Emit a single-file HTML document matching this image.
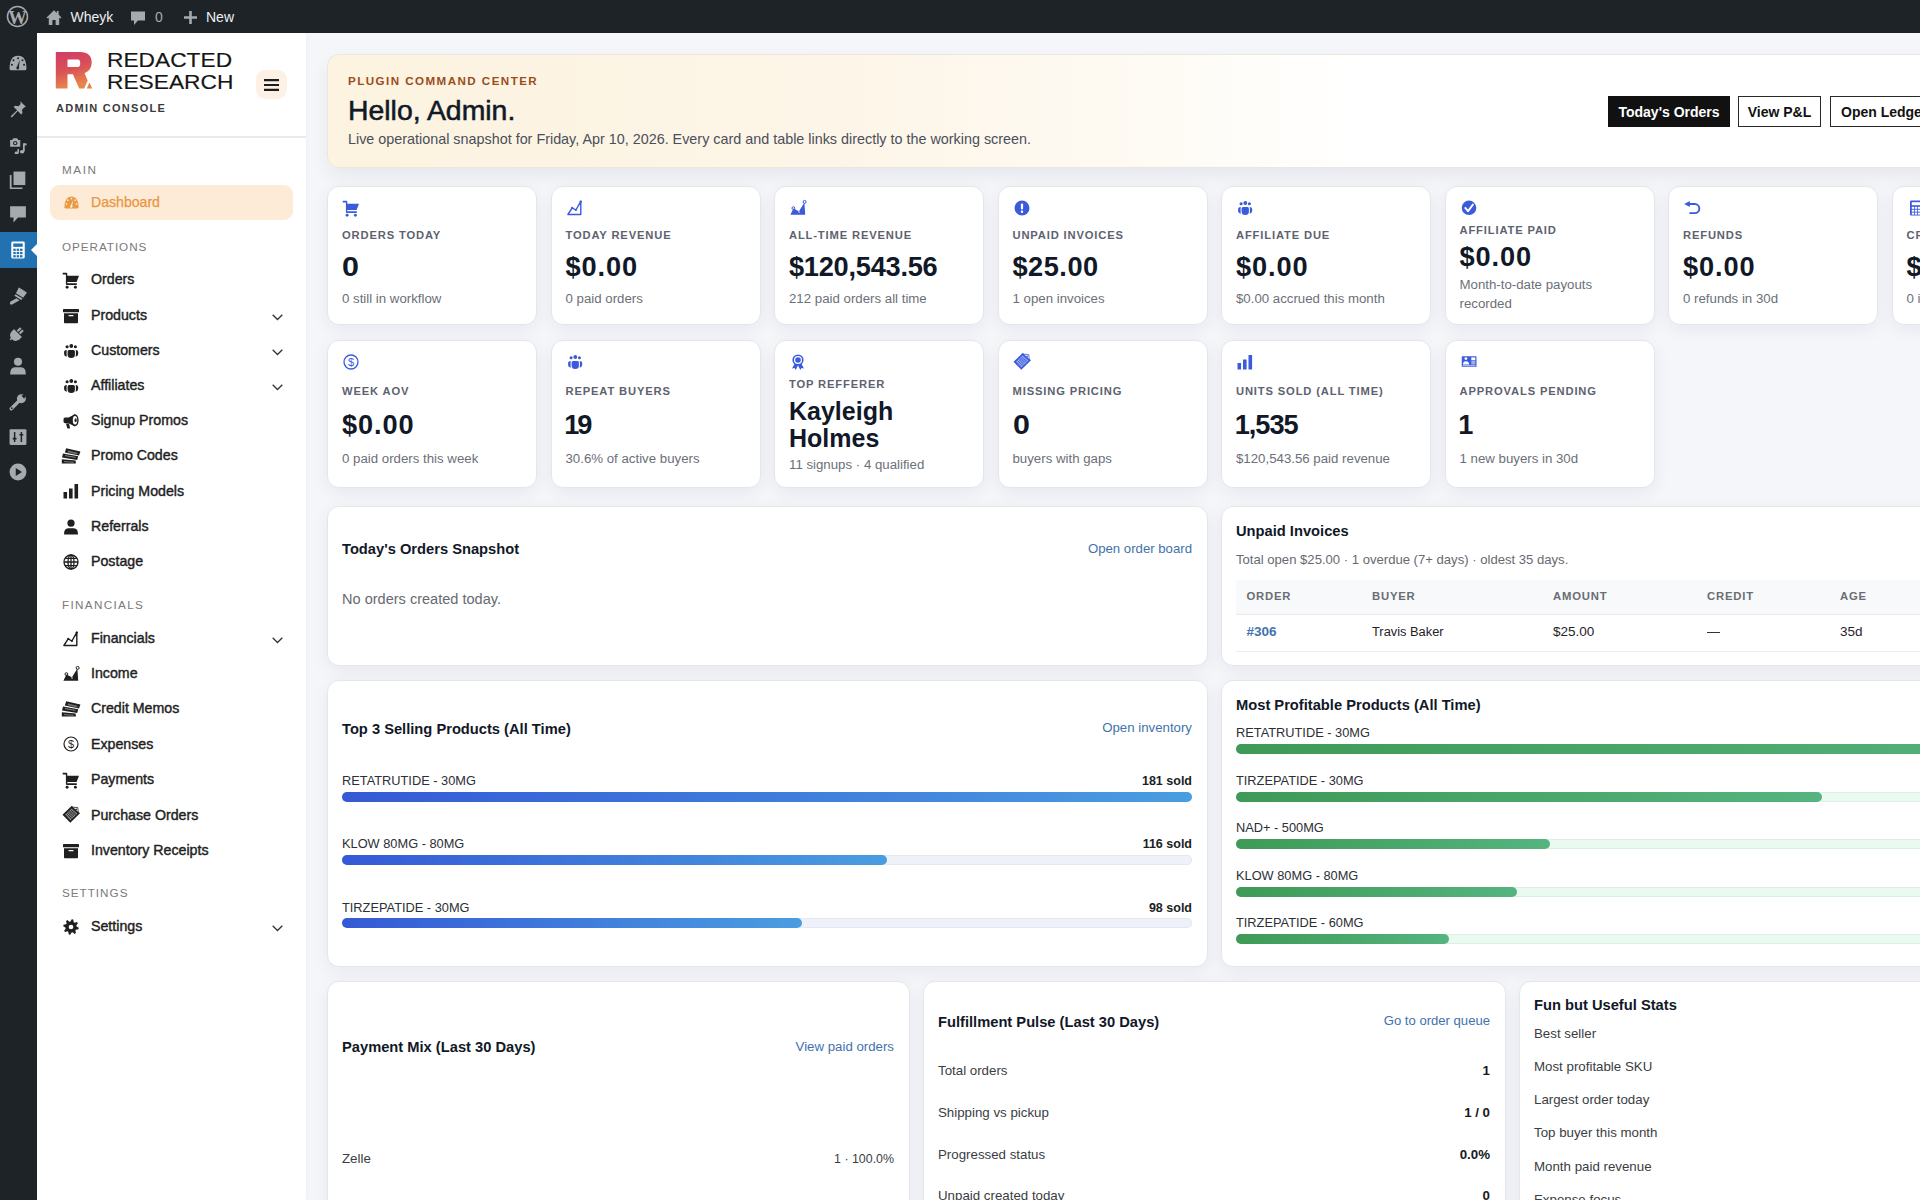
<!DOCTYPE html>
<html><head><meta charset="utf-8"><title>Dashboard</title>
<style>
html,body{margin:0;padding:0;width:1920px;height:1200px;overflow:hidden;}
body{background:#f5f6fa;font-family:"Liberation Sans", sans-serif;}
#root{position:relative;width:1920px;height:1200px;overflow:hidden;background:#f5f6fa;}
.t{position:absolute;white-space:nowrap;line-height:1;}
.card{position:absolute;background:#fff;border:1px solid #e4e6eb;border-radius:12px;box-shadow:0 5px 18px rgba(20,25,45,0.06);box-sizing:border-box;}
</style></head><body><div id="root">

<div style="position:absolute;left:0px;top:0px;width:1920px;height:33px;background:#1d2327;"></div>
<svg style="position:absolute;left:6px;top:5px;" width="23" height="23" viewBox="0 0 23 23"><circle cx="11.5" cy="11.5" r="10" fill="none" stroke="#a7aaad" stroke-width="1.5"/><text x="11.6" y="18.6" text-anchor="middle" font-family="Liberation Serif" font-weight="700" font-size="18.5" fill="#a7aaad">W</text></svg>
<svg style="position:absolute;left:45.5px;top:8.5px;" width="16" height="17" viewBox="0 0 16 17"><path d="M8 1.2L0.6 8.4L1.8 9.4L2.8 8.5V16H13.2V8.5L14.2 9.4L15.4 8.4L12.6 5.6V2H10.8V3.9z" fill="#a7aaad"/><rect x="6.4" y="11" width="3.2" height="5" fill="#1d2327"/></svg>
<div class="t" style="left:70.5px;top:10.05px;font-size:14px;font-weight:400;color:#f0f0f1;letter-spacing:0px;">Wheyk</div>
<svg style="position:absolute;left:130px;top:10px;" width="16" height="16" viewBox="0 0 16 16"><path d="M1 1.5h14v9H8l-4 4.5v-4.5H1z" fill="#a7aaad"/></svg>
<div class="t" style="left:155px;top:10.05px;font-size:14px;font-weight:400;color:#a7aaad;letter-spacing:0px;">0</div>
<svg style="position:absolute;left:183px;top:10px;" width="15" height="15" viewBox="0 0 15 15"><path d="M7.5 1v13M1 7.5h13" stroke="#a7aaad" stroke-width="2.6"/></svg>
<div class="t" style="left:206px;top:10.05px;font-size:14px;font-weight:400;color:#f0f0f1;letter-spacing:0px;">New</div>
<div style="position:absolute;left:0px;top:33px;width:37px;height:1167px;background:#1d2327;"></div>
<svg style="position:absolute;left:9px;top:54px;" width="18" height="18" viewBox="0 0 16 16"><path d="M0.5 13Q0.5 1.5 8 1.5T15.5 13Q15.5 14.5 14 14.5H2Q0.5 14.5 0.5 13z" fill="#a7aaad"/><circle cx="4" cy="5.5" r="0.9" fill="#1d2327"/><circle cx="8" cy="3.8" r="0.9" fill="#1d2327"/><circle cx="12" cy="5.5" r="0.9" fill="#1d2327"/><circle cx="2.6" cy="9.5" r="0.9" fill="#1d2327"/><circle cx="13.4" cy="9.5" r="0.9" fill="#1d2327"/><path d="M9.6 5.2L7.2 11.2a1.3 1.3 0 1 0 1.6 0.3z" fill="#1d2327"/></svg>
<svg style="position:absolute;left:9px;top:100px;" width="18" height="18" viewBox="0 0 16 16"><path d="M10 1l5 5-1.5 0.6-2 2 0.5 3-1.2 1.2-3-3L2.5 15.5 1.5 14.5 7.2 9.2 4.2 6.2 5.4 5 8.4 5.5 10.4 3.5z" fill="#a7aaad"/></svg>
<svg style="position:absolute;left:9px;top:136px;" width="18" height="18" viewBox="0 0 16 16"><path d="M1 3.5H2.8L3.8 2H7.2L8.2 3.5H10V9.5H1z" fill="#a7aaad"/><circle cx="5.5" cy="6.4" r="1.9" fill="#1d2327"/><circle cx="5.5" cy="6.4" r="1" fill="#a7aaad"/><path d="M13.2 6.5V13.6" stroke="#a7aaad" stroke-width="1.6"/><path d="M13.2 6.5H15.6V8.4H13.2z" fill="#a7aaad"/><ellipse cx="11.6" cy="14" rx="2" ry="1.6" fill="#a7aaad"/><path d="M8.2 11.5V14.8" stroke="#a7aaad" stroke-width="1.4"/><ellipse cx="6.8" cy="15" rx="1.8" ry="1.3" fill="#a7aaad"/></svg>
<svg style="position:absolute;left:9px;top:171px;" width="18" height="18" viewBox="0 0 16 16"><rect x="4" y="0.5" width="10.5" height="12" fill="#a7aaad"/><path d="M1.5 3.5v12h10.5" fill="none" stroke="#a7aaad" stroke-width="1.6"/></svg>
<svg style="position:absolute;left:9px;top:205px;" width="18" height="18" viewBox="0 0 16 16"><path d="M1 1h14v10H8l-4 4.5V11H1z" fill="#a7aaad"/></svg>
<div style="position:absolute;left:0px;top:232px;width:37px;height:36px;background:#2271b1;"></div>
<svg style="position:absolute;left:9px;top:241px;" width="18" height="18" viewBox="0 0 16 16"><rect x="2" y="0.5" width="12" height="15" rx="1.2" fill="#fff"/><rect x="3.8" y="2.2" width="8.4" height="3" fill="#2271b1"/><rect x="3.8" y="6.8" width="2.2" height="2" fill="#2271b1"/><rect x="6.8" y="6.8" width="2.2" height="2" fill="#2271b1"/><rect x="9.8" y="6.8" width="2.2" height="2" fill="#2271b1"/><rect x="3.8" y="9.7" width="2.2" height="2" fill="#2271b1"/><rect x="6.8" y="9.7" width="2.2" height="2" fill="#2271b1"/><rect x="9.8" y="9.7" width="2.2" height="2" fill="#2271b1"/><rect x="3.8" y="12.6" width="2.2" height="2" fill="#2271b1"/><rect x="6.8" y="12.6" width="2.2" height="2" fill="#2271b1"/><rect x="9.8" y="12.6" width="2.2" height="2" fill="#2271b1"/></svg>
<svg style="position:absolute;left:31px;top:244px;" width="6" height="12" viewBox="0 0 6 12"><path d="M6 0L0 6l6 6z" fill="#fff"/></svg>
<svg style="position:absolute;left:9px;top:287px;" width="18" height="18" viewBox="0 0 16 16"><path d="M9.2 0.6L15.6 4.6Q15.9 5.2 15.4 5.8L12.6 9.6L6.2 5.6L8.4 1Q8.7 0.4 9.2 0.6z" fill="#a7aaad"/><path d="M5.8 6.4L12 10.2L10.9 11.6L4.8 7.8z" fill="#a7aaad"/><path d="M6.6 10L9.4 11.8L3.2 15.4Q1.8 16.2 1 15.2T1.9 12.6z" fill="#a7aaad"/></svg>
<svg style="position:absolute;left:9px;top:324px;" width="18" height="18" viewBox="0 0 16 16"><path d="M1 14l3-3 M4.5 5.5l6 6-2 2Q5.5 15.5 3 13T2.5 7.5z" fill="#a7aaad" stroke="#a7aaad" stroke-width="1.4"/><path d="M7.5 6.5l3-3M9.5 8.5l3-3" stroke="#a7aaad" stroke-width="1.8"/></svg>
<svg style="position:absolute;left:9px;top:357px;" width="18" height="18" viewBox="0 0 16 16"><circle cx="8" cy="4.2" r="3.6" fill="#a7aaad"/><path d="M1 15.5Q1 9.2 5.2 9.2H10.8Q15 9.2 15 15.5z" fill="#a7aaad"/></svg>
<svg style="position:absolute;left:9px;top:393px;" width="18" height="18" viewBox="0 0 16 16"><path d="M2 14l7-7" stroke="#a7aaad" stroke-width="3" stroke-linecap="round"/><circle cx="11" cy="5" r="4" fill="#a7aaad"/><path d="M11 2.5l3 -1.5 1 1-1.5 3z" fill="#1d2327"/><circle cx="2.5" cy="13.5" r="0.8" fill="#1d2327"/></svg>
<svg style="position:absolute;left:9px;top:428px;" width="18" height="18" viewBox="0 0 16 16"><rect x="0.5" y="1" width="15" height="14" rx="1" fill="#a7aaad"/><path d="M5 3.5v9M11 3.5v9" stroke="#1d2327" stroke-width="1.3"/><path d="M3.3 9.5h3.4M9.3 6h3.4" stroke="#1d2327" stroke-width="1.5"/></svg>
<svg style="position:absolute;left:9px;top:463px;" width="18" height="18" viewBox="0 0 16 16"><circle cx="8" cy="8" r="7.5" fill="#a7aaad"/><path d="M6 4.5l5.5 3.5L6 11.5z" fill="#1d2327"/></svg>
<div style="position:absolute;left:37px;top:33px;width:269px;height:1167px;background:#fff;box-shadow:1px 0 5px rgba(20,25,40,0.035);"></div>
<svg style="position:absolute;left:50px;top:45px;" width="50" height="50" viewBox="0 0 50 50"><defs><linearGradient id="rg" x1="0" y1="0" x2="0.25" y2="1"><stop offset="0" stop-color="#d13a66"/><stop offset="0.55" stop-color="#d95258"/><stop offset="1" stop-color="#e8864a"/></linearGradient></defs><path d="M5.8 6.9H30Q41.7 6.9 41.7 17.6Q41.7 25.5 34.6 28.3L37.7 35.4L34.2 43.5H29.2L22.9 29.2H17.5V43.5H5.8Z M17.5 14.6H28Q30.2 14.6 30.2 18.35Q30.2 22.1 28 22.1H17.5Z" fill="url(#rg)" fill-rule="evenodd"/><path d="M36.8 43.5L39.4 37.6L42.3 43.5Z" fill="#e5843f"/></svg>
<div class="t" style="left:106.8px;top:50.07px;font-size:20px;font-weight:400;color:#161616;letter-spacing:0px;transform:scaleX(1.137);transform-origin:0 0;-webkit-text-stroke:0.15px #161616;">REDACTED</div>
<div class="t" style="left:106.8px;top:72.07px;font-size:20px;font-weight:400;color:#161616;letter-spacing:0px;transform:scaleX(1.137);transform-origin:0 0;-webkit-text-stroke:0.15px #161616;">RESEARCH</div>
<div style="position:absolute;left:256px;top:70px;width:31px;height:29px;background:#fdf1e6;border-radius:9px;"></div>
<svg style="position:absolute;left:264px;top:79px;" width="15" height="12" viewBox="0 0 15 12"><path d="M0 1.2h15M0 6h15M0 10.8h15" stroke="#1d1d1d" stroke-width="2.2"/></svg>
<div class="t" style="left:56px;top:102.69px;font-size:11px;font-weight:700;color:#3a3a3a;letter-spacing:1.28px;">ADMIN CONSOLE</div>
<div style="position:absolute;left:37px;top:136px;width:269px;height:1.5px;background:#e8e9ec;"></div>
<div class="t" style="left:62px;top:163.80px;font-size:11.7px;font-weight:400;color:#7a7a7a;letter-spacing:1.6px;">MAIN</div>
<div style="position:absolute;left:50px;top:185px;width:243px;height:35px;background:#fdebd8;border-radius:9px;"></div>
<svg style="position:absolute;left:64px;top:195px;" width="15" height="15" viewBox="0 0 16 16"><path d="M0.5 13Q0.5 1.5 8 1.5T15.5 13Q15.5 14.5 14 14.5H2Q0.5 14.5 0.5 13z" fill="#e89a45"/><circle cx="4" cy="5.5" r="0.9" fill="#fdebd8"/><circle cx="8" cy="3.8" r="0.9" fill="#fdebd8"/><circle cx="12" cy="5.5" r="0.9" fill="#fdebd8"/><circle cx="2.6" cy="9.5" r="0.9" fill="#fdebd8"/><circle cx="13.4" cy="9.5" r="0.9" fill="#fdebd8"/><path d="M9.6 5.2L7.2 11.2a1.3 1.3 0 1 0 1.6 0.3z" fill="#fdebd8"/></svg>
<div class="t" style="left:91px;top:195.26px;font-size:14.1px;font-weight:400;color:#e8963f;letter-spacing:0px;-webkit-text-stroke:0.25px #e8963f;">Dashboard</div>
<div class="t" style="left:62px;top:240.90px;font-size:11.7px;font-weight:400;color:#7a7a7a;letter-spacing:0.95px;">OPERATIONS</div>
<svg style="position:absolute;left:63px;top:271.8px;overflow:visible;" width="16" height="16" viewBox="0 0 16 16"><path d="M-0.3 0.8H3.4Q4.3 0.8 4.3 1.8V3.8H16L13.6 10H4.3V11.3H13.8V12.9H3.9Q2.9 12.9 2.9 11.9V2.6H-0.3Z" fill="#1f1f1f"/><circle cx="4.1" cy="15.3" r="1.45" fill="#1f1f1f"/><circle cx="12.4" cy="15.3" r="1.45" fill="#1f1f1f"/></svg>
<div class="t" style="left:91px;top:272.18px;font-size:14.2px;font-weight:400;color:#1f1f1f;letter-spacing:0px;-webkit-text-stroke:0.42px #1f1f1f;">Orders</div>
<svg style="position:absolute;left:63px;top:307.6px;overflow:visible;" width="16" height="16" viewBox="0 0 16 16"><rect x="0" y="1" width="16" height="3.2" rx="0.5" fill="#1f1f1f"/><path d="M1 5.2h14v9.3a0.8 0.8 0 0 1-0.8 0.8H1.8A0.8 0.8 0 0 1 1 14.5z" fill="#1f1f1f"/><rect x="5.5" y="7" width="5" height="1.3" rx="0.6" fill="#fff"/></svg>
<div class="t" style="left:91px;top:307.98px;font-size:14.2px;font-weight:400;color:#1f1f1f;letter-spacing:0px;-webkit-text-stroke:0.42px #1f1f1f;">Products</div>
<svg style="position:absolute;left:272px;top:313.5px;" width="11" height="7" viewBox="0 0 11 7"><path d="M0.7 0.7L5.5 5.5L10.3 0.7" fill="none" stroke="#333" stroke-width="1.3"/></svg>
<svg style="position:absolute;left:63px;top:342.8px;overflow:visible;" width="16" height="16" viewBox="0 0 16 16"><circle cx="8.3" cy="3" r="1.9" fill="#1f1f1f"/><circle cx="4.1" cy="3.8" r="1.55" fill="#1f1f1f"/><circle cx="12.4" cy="3.8" r="1.55" fill="#1f1f1f"/><path d="M4.6 8.4Q4.6 6.9 6.1 6.9H10.4Q11.9 6.9 11.9 8.4V11.5Q11.9 15 8.25 15T4.6 11.5z" fill="#1f1f1f"/><path d="M3.9 6.9Q1.1 6.9 1.1 9V10.8Q1.1 13.3 3.9 13.75Q3.6 12.5 3.6 11.2V8.4Q3.6 7.4 3.9 6.9z" fill="#1f1f1f"/><path d="M12.6 6.9Q15.2 6.9 15.2 9V10.8Q15.2 13.3 12.6 13.75Q12.9 12.5 12.9 11.2V8.4Q12.9 7.4 12.6 6.9z" fill="#1f1f1f"/></svg>
<div class="t" style="left:91px;top:343.18px;font-size:14.2px;font-weight:400;color:#1f1f1f;letter-spacing:0px;-webkit-text-stroke:0.42px #1f1f1f;">Customers</div>
<svg style="position:absolute;left:272px;top:348.7px;" width="11" height="7" viewBox="0 0 11 7"><path d="M0.7 0.7L5.5 5.5L10.3 0.7" fill="none" stroke="#333" stroke-width="1.3"/></svg>
<svg style="position:absolute;left:63px;top:378.0px;overflow:visible;" width="16" height="16" viewBox="0 0 16 16"><circle cx="8.3" cy="3" r="1.9" fill="#1f1f1f"/><circle cx="4.1" cy="3.8" r="1.55" fill="#1f1f1f"/><circle cx="12.4" cy="3.8" r="1.55" fill="#1f1f1f"/><path d="M4.6 8.4Q4.6 6.9 6.1 6.9H10.4Q11.9 6.9 11.9 8.4V11.5Q11.9 15 8.25 15T4.6 11.5z" fill="#1f1f1f"/><path d="M3.9 6.9Q1.1 6.9 1.1 9V10.8Q1.1 13.3 3.9 13.75Q3.6 12.5 3.6 11.2V8.4Q3.6 7.4 3.9 6.9z" fill="#1f1f1f"/><path d="M12.6 6.9Q15.2 6.9 15.2 9V10.8Q15.2 13.3 12.6 13.75Q12.9 12.5 12.9 11.2V8.4Q12.9 7.4 12.6 6.9z" fill="#1f1f1f"/></svg>
<div class="t" style="left:91px;top:378.38px;font-size:14.2px;font-weight:400;color:#1f1f1f;letter-spacing:0px;-webkit-text-stroke:0.42px #1f1f1f;">Affiliates</div>
<svg style="position:absolute;left:272px;top:383.9px;" width="11" height="7" viewBox="0 0 11 7"><path d="M0.7 0.7L5.5 5.5L10.3 0.7" fill="none" stroke="#333" stroke-width="1.3"/></svg>
<svg style="position:absolute;left:63px;top:412.90000000000003px;overflow:visible;" width="16" height="16" viewBox="0 0 16 16"><path d="M0.5 6.2Q0.5 4.5 2.2 4.5H5.5L12 1.2V13.4L5.5 10.3H2.2Q0.5 10.3 0.5 8.6z" fill="#1f1f1f"/><path d="M3 10.5h3l1 4.2Q7 15.6 6 15.6H5Q4.3 15.6 4.1 14.8z" fill="#1f1f1f"/><ellipse cx="12" cy="7.3" rx="3.6" ry="6" fill="#1f1f1f"/><ellipse cx="12" cy="7.3" rx="2.2" ry="4.3" fill="#fff"/><ellipse cx="12.6" cy="7.3" rx="1.1" ry="2" fill="#1f1f1f"/></svg>
<div class="t" style="left:91px;top:413.28px;font-size:14.2px;font-weight:400;color:#1f1f1f;letter-spacing:0px;-webkit-text-stroke:0.42px #1f1f1f;">Signup Promos</div>
<svg style="position:absolute;left:63px;top:448.1px;overflow:visible;" width="16" height="16" viewBox="0 0 16 16"><path d="M3.2 0.2L17.4 3.4L16 7.6L1.8 4.4Z" fill="#1f1f1f"/><path d="M5 2.6L14.6 4.8L14 6.4L4.5 4.2Z" fill="#fff" fill-opacity="0.35"/><path d="M0 5.6L15.2 8.2L14.2 12L-1 9.4Z" fill="#1f1f1f"/><path d="M2 7.6L12.6 9.4" stroke="#fff" stroke-opacity="0.5" stroke-width="0.9"/><path d="M-1.2 11.2L12.6 12.4L12.9 15.6H-1.2Z" fill="#1f1f1f"/><path d="M1 13.6L10.6 14.3" stroke="#fff" stroke-opacity="0.5" stroke-width="0.8"/></svg>
<div class="t" style="left:91px;top:448.48px;font-size:14.2px;font-weight:400;color:#1f1f1f;letter-spacing:0px;-webkit-text-stroke:0.42px #1f1f1f;">Promo Codes</div>
<svg style="position:absolute;left:63px;top:483.3px;overflow:visible;" width="16" height="16" viewBox="0 0 16 16"><rect x="0.5" y="9" width="3.6" height="6.5" fill="#1f1f1f"/><rect x="6" y="5.5" width="3.6" height="10" fill="#1f1f1f"/><rect x="11.5" y="1" width="3.6" height="14.5" fill="#1f1f1f"/></svg>
<div class="t" style="left:91px;top:483.68px;font-size:14.2px;font-weight:400;color:#1f1f1f;letter-spacing:0px;-webkit-text-stroke:0.42px #1f1f1f;">Pricing Models</div>
<svg style="position:absolute;left:63px;top:518.5px;overflow:visible;" width="16" height="16" viewBox="0 0 16 16"><circle cx="8" cy="4.2" r="3.6" fill="#1f1f1f"/><path d="M1 15.5Q1 9.2 5.2 9.2H10.8Q15 9.2 15 15.5z" fill="#1f1f1f"/></svg>
<div class="t" style="left:91px;top:518.88px;font-size:14.2px;font-weight:400;color:#1f1f1f;letter-spacing:0px;-webkit-text-stroke:0.42px #1f1f1f;">Referrals</div>
<svg style="position:absolute;left:63px;top:553.7px;overflow:visible;" width="16" height="16" viewBox="0 0 16 16"><g fill="none" stroke="#1f1f1f" stroke-width="1.3"><circle cx="8" cy="8" r="7"/><ellipse cx="8" cy="8" rx="3" ry="7"/><path d="M8 1v14M1 8h14M2 4.3h12M2 11.7h12"/></g></svg>
<div class="t" style="left:91px;top:554.08px;font-size:14.2px;font-weight:400;color:#1f1f1f;letter-spacing:0px;-webkit-text-stroke:0.42px #1f1f1f;">Postage</div>
<div class="t" style="left:62px;top:599.20px;font-size:11.7px;font-weight:400;color:#7a7a7a;letter-spacing:1.33px;">FINANCIALS</div>
<svg style="position:absolute;left:63px;top:630.9px;overflow:visible;" width="16" height="16" viewBox="0 0 16 16"><path d="M0.9 14.5L5.2 7.8L8.9 10L13.8 1.3V14.5Z" fill="none" stroke="#1f1f1f" stroke-width="1.4" stroke-linejoin="round"/><circle cx="5.2" cy="7.8" r="1" fill="#1f1f1f"/><circle cx="8.9" cy="10" r="1" fill="#1f1f1f"/><circle cx="13.8" cy="1.6" r="1.2" fill="#1f1f1f"/></svg>
<div class="t" style="left:91px;top:631.28px;font-size:14.2px;font-weight:400;color:#1f1f1f;letter-spacing:0px;-webkit-text-stroke:0.42px #1f1f1f;">Financials</div>
<svg style="position:absolute;left:272px;top:636.8px;" width="11" height="7" viewBox="0 0 11 7"><path d="M0.7 0.7L5.5 5.5L10.3 0.7" fill="none" stroke="#333" stroke-width="1.3"/></svg>
<svg style="position:absolute;left:63px;top:665.9px;overflow:visible;" width="16" height="16" viewBox="0 0 16 16"><path d="M0.4 14.7L3.4 8.6L9 11.3L14.4 2.6L15.2 14.7Z" fill="#1f1f1f"/><circle cx="3.4" cy="8.1" r="1.4" fill="none" stroke="#1f1f1f" stroke-width="1"/><circle cx="14.6" cy="1.9" r="1.5" fill="none" stroke="#1f1f1f" stroke-width="1"/><path d="M8 11.8l2 0.3" stroke="#fff" stroke-width="0.8"/></svg>
<div class="t" style="left:91px;top:666.28px;font-size:14.2px;font-weight:400;color:#1f1f1f;letter-spacing:0px;-webkit-text-stroke:0.42px #1f1f1f;">Income</div>
<svg style="position:absolute;left:63px;top:700.9px;overflow:visible;" width="16" height="16" viewBox="0 0 16 16"><path d="M3.2 0.2L17.4 3.4L16 7.6L1.8 4.4Z" fill="#1f1f1f"/><path d="M5 2.6L14.6 4.8L14 6.4L4.5 4.2Z" fill="#fff" fill-opacity="0.35"/><path d="M0 5.6L15.2 8.2L14.2 12L-1 9.4Z" fill="#1f1f1f"/><path d="M2 7.6L12.6 9.4" stroke="#fff" stroke-opacity="0.5" stroke-width="0.9"/><path d="M-1.2 11.2L12.6 12.4L12.9 15.6H-1.2Z" fill="#1f1f1f"/><path d="M1 13.6L10.6 14.3" stroke="#fff" stroke-opacity="0.5" stroke-width="0.8"/></svg>
<div class="t" style="left:91px;top:701.28px;font-size:14.2px;font-weight:400;color:#1f1f1f;letter-spacing:0px;-webkit-text-stroke:0.42px #1f1f1f;">Credit Memos</div>
<svg style="position:absolute;left:63px;top:736.4px;overflow:visible;" width="16" height="16" viewBox="0 0 16 16"><circle cx="8" cy="8" r="7" fill="none" stroke="#1f1f1f" stroke-width="1.2"/><text x="8" y="12.2" text-anchor="middle" font-family="Liberation Sans" font-size="11" fill="#1f1f1f">$</text></svg>
<div class="t" style="left:91px;top:736.78px;font-size:14.2px;font-weight:400;color:#1f1f1f;letter-spacing:0px;-webkit-text-stroke:0.42px #1f1f1f;">Expenses</div>
<svg style="position:absolute;left:63px;top:771.8000000000001px;overflow:visible;" width="16" height="16" viewBox="0 0 16 16"><path d="M-0.3 0.8H3.4Q4.3 0.8 4.3 1.8V3.8H16L13.6 10H4.3V11.3H13.8V12.9H3.9Q2.9 12.9 2.9 11.9V2.6H-0.3Z" fill="#1f1f1f"/><circle cx="4.1" cy="15.3" r="1.45" fill="#1f1f1f"/><circle cx="12.4" cy="15.3" r="1.45" fill="#1f1f1f"/></svg>
<div class="t" style="left:91px;top:772.18px;font-size:14.2px;font-weight:400;color:#1f1f1f;letter-spacing:0px;-webkit-text-stroke:0.42px #1f1f1f;">Payments</div>
<svg style="position:absolute;left:63px;top:807.2px;overflow:visible;" width="16" height="16" viewBox="0 0 16 16"><path d="M-0.5 7.8L8.8 -1.2L17 6.3L7.3 15.8Z" fill="#1f1f1f"/><path d="M2.2 7.8L8.8 1.5L14.3 6.5L7.3 13.2Z" fill="#fff" fill-opacity="0.55"/><path d="M3.22 8.88L9.90 2.50" stroke="#1f1f1f" stroke-width="0.7"/><path d="M3.52 6.54L8.70 11.86" stroke="#1f1f1f" stroke-width="0.7"/><path d="M4.24 9.96L11.00 3.50" stroke="#1f1f1f" stroke-width="0.7"/><path d="M4.84 5.28L10.10 10.52" stroke="#1f1f1f" stroke-width="0.7"/><path d="M5.26 11.04L12.10 4.50" stroke="#1f1f1f" stroke-width="0.7"/><path d="M6.16 4.02L11.50 9.18" stroke="#1f1f1f" stroke-width="0.7"/><path d="M6.28 12.12L13.20 5.50" stroke="#1f1f1f" stroke-width="0.7"/><path d="M7.48 2.76L12.90 7.84" stroke="#1f1f1f" stroke-width="0.7"/><path d="M10.3 0.2L14.8 0.6L15.2 5" fill="#fff" stroke="#1f1f1f" stroke-width="0.8"/><circle cx="13.2" cy="2.4" r="0.8" fill="#1f1f1f"/></svg>
<div class="t" style="left:91px;top:807.58px;font-size:14.2px;font-weight:400;color:#1f1f1f;letter-spacing:0px;-webkit-text-stroke:0.42px #1f1f1f;">Purchase Orders</div>
<svg style="position:absolute;left:63px;top:842.6px;overflow:visible;" width="16" height="16" viewBox="0 0 16 16"><rect x="0" y="1" width="16" height="3.2" rx="0.5" fill="#1f1f1f"/><path d="M1 5.2h14v9.3a0.8 0.8 0 0 1-0.8 0.8H1.8A0.8 0.8 0 0 1 1 14.5z" fill="#1f1f1f"/><rect x="5.5" y="7" width="5" height="1.3" rx="0.6" fill="#fff"/></svg>
<div class="t" style="left:91px;top:842.98px;font-size:14.2px;font-weight:400;color:#1f1f1f;letter-spacing:0px;-webkit-text-stroke:0.42px #1f1f1f;">Inventory Receipts</div>
<div class="t" style="left:62px;top:887.40px;font-size:11.7px;font-weight:400;color:#7a7a7a;letter-spacing:1.0px;">SETTINGS</div>
<svg style="position:absolute;left:63px;top:919.1px;overflow:visible;" width="16" height="16" viewBox="0 0 16 16"><polygon points="8.76,0.24 10.26,0.54 10.64,3.06 11.55,3.67 14.03,3.05 14.88,4.32 13.36,6.37 13.57,7.45 15.76,8.76 15.46,10.26 12.94,10.64 12.33,11.55 12.95,14.03 11.68,14.88 9.63,13.36 8.55,13.57 7.24,15.76 5.74,15.46 5.36,12.94 4.45,12.33 1.97,12.95 1.12,11.68 2.64,9.63 2.43,8.55 0.24,7.24 0.54,5.74 3.06,5.36 3.67,4.45 3.05,1.97 4.32,1.12 6.37,2.64 7.45,2.43" fill="#1f1f1f"/><circle cx="8" cy="8" r="2.3" fill="#fff"/></svg>
<div class="t" style="left:91px;top:919.48px;font-size:14.2px;font-weight:400;color:#1f1f1f;letter-spacing:0px;-webkit-text-stroke:0.42px #1f1f1f;">Settings</div>
<svg style="position:absolute;left:272px;top:925.0px;" width="11" height="7" viewBox="0 0 11 7"><path d="M0.7 0.7L5.5 5.5L10.3 0.7" fill="none" stroke="#333" stroke-width="1.3"/></svg>
<div class="card" style="left:327px;top:53.5px;width:1774.5px;height:114.5px;border-color:#ebe7e0;background:linear-gradient(90deg,#fcf3e0 0%,#fdf5e7 28%,#fefaf2 44%,#ffffff 58%);box-shadow:0 8px 18px rgba(20,25,40,0.06);"></div>
<div class="t" style="left:348px;top:75.48px;font-size:11.6px;font-weight:700;color:#9b4d1c;letter-spacing:1.45px;">PLUGIN COMMAND CENTER</div>
<div class="t" style="left:348px;top:95.96px;font-size:28.4px;font-weight:400;color:#111827;letter-spacing:0px;-webkit-text-stroke:0.55px #111827;">Hello, Admin.</div>
<div class="t" style="left:348px;top:131.84px;font-size:14.36px;font-weight:400;color:#4a4f5a;letter-spacing:0px;">Live operational snapshot for Friday, Apr 10, 2026. Every card and table links directly to the working screen.</div>
<div style="position:absolute;left:1608px;top:96px;width:122px;height:31px;background:#111;"></div>
<div class="t" style="left:1669px;top:104.65px;font-size:14px;font-weight:700;color:#fff;letter-spacing:0px;transform:translateX(-50%);">Today's Orders</div>
<div style="position:absolute;left:1738px;top:96px;width:83px;height:31px;background:#fff;border:1.5px solid #2a2a2a;box-sizing:border-box;"></div>
<div class="t" style="left:1779.5px;top:104.65px;font-size:14px;font-weight:700;color:#111;letter-spacing:0px;transform:translateX(-50%);">View P&amp;L</div>
<div style="position:absolute;left:1830px;top:96px;width:110px;height:31px;background:#fff;border:1.5px solid #2a2a2a;box-sizing:border-box;"></div>
<div class="t" style="left:1841px;top:104.65px;font-size:14px;font-weight:700;color:#111;letter-spacing:0px;">Open Ledger</div>
<div class="card" style="left:327px;top:185.7px;width:210px;height:139.5px;"></div>
<svg style="position:absolute;left:343px;top:199.7px;overflow:visible;" width="16" height="16" viewBox="0 0 16 16"><path d="M-0.3 0.8H3.4Q4.3 0.8 4.3 1.8V3.8H16L13.6 10H4.3V11.3H13.8V12.9H3.9Q2.9 12.9 2.9 11.9V2.6H-0.3Z" fill="#3b5bdb"/><circle cx="4.1" cy="15.3" r="1.45" fill="#3b5bdb"/><circle cx="12.4" cy="15.3" r="1.45" fill="#3b5bdb"/></svg>
<div class="t" style="left:342px;top:229.52px;font-size:11.2px;font-weight:700;color:#5d6270;letter-spacing:0.85px;">ORDERS TODAY</div>
<div class="t" style="left:342px;top:252.68px;font-size:27.2px;font-weight:700;color:#111827;letter-spacing:0px;transform:scaleX(1.12);transform-origin:0 0;">0</div>
<div class="t" style="left:342px;top:292.08px;font-size:13.25px;font-weight:400;color:#6b6f78;letter-spacing:0px;">0 still in workflow</div>
<div class="card" style="left:550.5px;top:185.7px;width:210px;height:139.5px;"></div>
<svg style="position:absolute;left:566.5px;top:199.7px;overflow:visible;" width="16" height="16" viewBox="0 0 16 16"><path d="M0.9 14.5L5.2 7.8L8.9 10L13.8 1.3V14.5Z" fill="none" stroke="#3b5bdb" stroke-width="1.4" stroke-linejoin="round"/><circle cx="5.2" cy="7.8" r="1" fill="#3b5bdb"/><circle cx="8.9" cy="10" r="1" fill="#3b5bdb"/><circle cx="13.8" cy="1.6" r="1.2" fill="#3b5bdb"/></svg>
<div class="t" style="left:565.5px;top:229.52px;font-size:11.2px;font-weight:700;color:#5d6270;letter-spacing:0.85px;">TODAY REVENUE</div>
<div class="t" style="left:565.5px;top:252.68px;font-size:27.2px;font-weight:700;color:#111827;letter-spacing:0.9px;">$0.00</div>
<div class="t" style="left:565.5px;top:292.08px;font-size:13.25px;font-weight:400;color:#6b6f78;letter-spacing:0px;">0 paid orders</div>
<div class="card" style="left:774px;top:185.7px;width:210px;height:139.5px;"></div>
<svg style="position:absolute;left:790px;top:199.7px;overflow:visible;" width="16" height="16" viewBox="0 0 16 16"><path d="M0.4 14.7L3.4 8.6L9 11.3L14.4 2.6L15.2 14.7Z" fill="#3b5bdb"/><circle cx="3.4" cy="8.1" r="1.4" fill="none" stroke="#3b5bdb" stroke-width="1"/><circle cx="14.6" cy="1.9" r="1.5" fill="none" stroke="#3b5bdb" stroke-width="1"/><path d="M8 11.8l2 0.3" stroke="#fff" stroke-width="0.8"/></svg>
<div class="t" style="left:789px;top:229.52px;font-size:11.2px;font-weight:700;color:#5d6270;letter-spacing:0.85px;">ALL-TIME REVENUE</div>
<div class="t" style="left:789px;top:252.68px;font-size:27.2px;font-weight:700;color:#111827;letter-spacing:-0.25px;">$120,543.56</div>
<div class="t" style="left:789px;top:292.08px;font-size:13.25px;font-weight:400;color:#6b6f78;letter-spacing:0px;">212 paid orders all time</div>
<div class="card" style="left:997.5px;top:185.7px;width:210px;height:139.5px;"></div>
<svg style="position:absolute;left:1013.5px;top:199.7px;overflow:visible;" width="16" height="16" viewBox="0 0 16 16"><circle cx="8" cy="8" r="7.5" fill="#3b5bdb"/><rect x="6.9" y="3.5" width="2.2" height="6" rx="1" fill="#fff"/><circle cx="8" cy="11.8" r="1.2" fill="#fff"/></svg>
<div class="t" style="left:1012.5px;top:229.52px;font-size:11.2px;font-weight:700;color:#5d6270;letter-spacing:0.85px;">UNPAID INVOICES</div>
<div class="t" style="left:1012.5px;top:252.68px;font-size:27.2px;font-weight:700;color:#111827;letter-spacing:0.5px;">$25.00</div>
<div class="t" style="left:1012.5px;top:292.08px;font-size:13.25px;font-weight:400;color:#6b6f78;letter-spacing:0px;">1 open invoices</div>
<div class="card" style="left:1221px;top:185.7px;width:210px;height:139.5px;"></div>
<svg style="position:absolute;left:1237px;top:199.7px;overflow:visible;" width="16" height="16" viewBox="0 0 16 16"><circle cx="8.3" cy="3" r="1.9" fill="#3b5bdb"/><circle cx="4.1" cy="3.8" r="1.55" fill="#3b5bdb"/><circle cx="12.4" cy="3.8" r="1.55" fill="#3b5bdb"/><path d="M4.6 8.4Q4.6 6.9 6.1 6.9H10.4Q11.9 6.9 11.9 8.4V11.5Q11.9 15 8.25 15T4.6 11.5z" fill="#3b5bdb"/><path d="M3.9 6.9Q1.1 6.9 1.1 9V10.8Q1.1 13.3 3.9 13.75Q3.6 12.5 3.6 11.2V8.4Q3.6 7.4 3.9 6.9z" fill="#3b5bdb"/><path d="M12.6 6.9Q15.2 6.9 15.2 9V10.8Q15.2 13.3 12.6 13.75Q12.9 12.5 12.9 11.2V8.4Q12.9 7.4 12.6 6.9z" fill="#3b5bdb"/></svg>
<div class="t" style="left:1236px;top:229.52px;font-size:11.2px;font-weight:700;color:#5d6270;letter-spacing:0.85px;">AFFILIATE DUE</div>
<div class="t" style="left:1236px;top:252.68px;font-size:27.2px;font-weight:700;color:#111827;letter-spacing:0.9px;">$0.00</div>
<div class="t" style="left:1236px;top:292.08px;font-size:13.25px;font-weight:400;color:#6b6f78;letter-spacing:0px;">$0.00 accrued this month</div>
<div class="card" style="left:1444.5px;top:185.7px;width:210px;height:139.5px;"></div>
<svg style="position:absolute;left:1460.5px;top:199.7px;overflow:visible;" width="16" height="16" viewBox="0 0 16 16"><circle cx="8" cy="7.8" r="7.3" fill="#3b5bdb"/><path d="M4.3 7.9L7 11.2L11.9 4.6" fill="none" stroke="#fff" stroke-width="1.9" stroke-linecap="round" stroke-linejoin="round"/></svg>
<div class="t" style="left:1459.5px;top:225.02px;font-size:11.2px;font-weight:700;color:#5d6270;letter-spacing:0.85px;">AFFILIATE PAID</div>
<div class="t" style="left:1459.5px;top:243.48px;font-size:27.2px;font-weight:700;color:#111827;letter-spacing:0.9px;">$0.00</div>
<div class="t" style="left:1459.5px;top:277.78px;font-size:13.25px;font-weight:400;color:#6b6f78;letter-spacing:0px;">Month-to-date payouts</div>
<div class="t" style="left:1459.5px;top:296.78px;font-size:13.25px;font-weight:400;color:#6b6f78;letter-spacing:0px;">recorded</div>
<div class="card" style="left:1668px;top:185.7px;width:210px;height:139.5px;"></div>
<svg style="position:absolute;left:1684px;top:199.7px;overflow:visible;" width="16" height="16" viewBox="0 0 16 16"><path d="M5.4 4.05H10.8A4.55 4.55 0 0 1 10.8 13.15H6.2" fill="none" stroke="#3b5bdb" stroke-width="1.9" stroke-linecap="round"/><path d="M0.2 4.05L5.8 1V7.1z" fill="#3b5bdb"/></svg>
<div class="t" style="left:1683px;top:229.52px;font-size:11.2px;font-weight:700;color:#5d6270;letter-spacing:0.85px;">REFUNDS</div>
<div class="t" style="left:1683px;top:252.68px;font-size:27.2px;font-weight:700;color:#111827;letter-spacing:0.9px;">$0.00</div>
<div class="t" style="left:1683px;top:292.08px;font-size:13.25px;font-weight:400;color:#6b6f78;letter-spacing:0px;">0 refunds in 30d</div>
<div class="card" style="left:1891.5px;top:185.7px;width:210px;height:139.5px;"></div>
<svg style="position:absolute;left:1907.5px;top:199.7px;overflow:visible;" width="16" height="16" viewBox="0 0 16 16"><rect x="2" y="0.5" width="12" height="15" rx="1.2" fill="#3b5bdb"/><rect x="3.8" y="2.2" width="8.4" height="3" fill="#fff"/><rect x="3.8" y="6.8" width="2.2" height="2" fill="#fff"/><rect x="6.8" y="6.8" width="2.2" height="2" fill="#fff"/><rect x="9.8" y="6.8" width="2.2" height="2" fill="#fff"/><rect x="3.8" y="9.7" width="2.2" height="2" fill="#fff"/><rect x="6.8" y="9.7" width="2.2" height="2" fill="#fff"/><rect x="9.8" y="9.7" width="2.2" height="2" fill="#fff"/><rect x="3.8" y="12.6" width="2.2" height="2" fill="#fff"/><rect x="6.8" y="12.6" width="2.2" height="2" fill="#fff"/><rect x="9.8" y="12.6" width="2.2" height="2" fill="#fff"/></svg>
<div class="t" style="left:1906.5px;top:229.52px;font-size:11.2px;font-weight:700;color:#5d6270;letter-spacing:0.85px;">CREDIT MEMOS</div>
<div class="t" style="left:1906.5px;top:252.68px;font-size:27.2px;font-weight:700;color:#111827;letter-spacing:0.9px;">$0.00</div>
<div class="t" style="left:1906.5px;top:292.08px;font-size:13.25px;font-weight:400;color:#6b6f78;letter-spacing:0px;">0 issued in 30d</div>
<div class="card" style="left:327px;top:339.7px;width:210px;height:148.3px;"></div>
<svg style="position:absolute;left:343px;top:353.7px;overflow:visible;" width="16" height="16" viewBox="0 0 16 16"><circle cx="8" cy="8" r="7" fill="none" stroke="#3b5bdb" stroke-width="1.3"/><text x="8" y="12.2" text-anchor="middle" font-family="Liberation Sans" font-size="11" fill="#3b5bdb">$</text></svg>
<div class="t" style="left:342px;top:385.52px;font-size:11.2px;font-weight:700;color:#5d6270;letter-spacing:0.85px;">WEEK AOV</div>
<div class="t" style="left:342px;top:410.68px;font-size:27.2px;font-weight:700;color:#111827;letter-spacing:0.9px;">$0.00</div>
<div class="t" style="left:342px;top:451.78px;font-size:13.25px;font-weight:400;color:#6b6f78;letter-spacing:0px;">0 paid orders this week</div>
<div class="card" style="left:550.5px;top:339.7px;width:210px;height:148.3px;"></div>
<svg style="position:absolute;left:566.5px;top:353.7px;overflow:visible;" width="16" height="16" viewBox="0 0 16 16"><circle cx="8.3" cy="3" r="1.9" fill="#3b5bdb"/><circle cx="4.1" cy="3.8" r="1.55" fill="#3b5bdb"/><circle cx="12.4" cy="3.8" r="1.55" fill="#3b5bdb"/><path d="M4.6 8.4Q4.6 6.9 6.1 6.9H10.4Q11.9 6.9 11.9 8.4V11.5Q11.9 15 8.25 15T4.6 11.5z" fill="#3b5bdb"/><path d="M3.9 6.9Q1.1 6.9 1.1 9V10.8Q1.1 13.3 3.9 13.75Q3.6 12.5 3.6 11.2V8.4Q3.6 7.4 3.9 6.9z" fill="#3b5bdb"/><path d="M12.6 6.9Q15.2 6.9 15.2 9V10.8Q15.2 13.3 12.6 13.75Q12.9 12.5 12.9 11.2V8.4Q12.9 7.4 12.6 6.9z" fill="#3b5bdb"/></svg>
<div class="t" style="left:565.5px;top:385.52px;font-size:11.2px;font-weight:700;color:#5d6270;letter-spacing:0.85px;">REPEAT BUYERS</div>
<div class="t" style="left:564.2px;top:410.68px;font-size:27.2px;font-weight:700;color:#111827;letter-spacing:-2.0px;">19</div>
<div class="t" style="left:565.5px;top:451.78px;font-size:13.25px;font-weight:400;color:#6b6f78;letter-spacing:0px;">30.6% of active buyers</div>
<div class="card" style="left:774px;top:339.7px;width:210px;height:148.3px;"></div>
<svg style="position:absolute;left:790px;top:353.7px;overflow:visible;" width="16" height="16" viewBox="0 0 16 16"><path d="M5 9l-3 5.5 2.5-0.5 1.2 2 2.3-4.5zM11 9l3 5.5-2.5-0.5-1.2 2-2.3-4.5z" fill="#3b5bdb"/><circle cx="8" cy="6" r="5.6" fill="#3b5bdb"/><circle cx="8" cy="6" r="4" fill="#fff"/><circle cx="8" cy="6" r="2.8" fill="#3b5bdb"/></svg>
<div class="t" style="left:789px;top:378.82px;font-size:11.2px;font-weight:700;color:#5d6270;letter-spacing:0.85px;">TOP REFFERER</div>
<div class="t" style="left:789px;top:399.14px;font-size:25px;font-weight:700;color:#111827;letter-spacing:0px;">Kayleigh</div>
<div class="t" style="left:789px;top:425.84px;font-size:25px;font-weight:700;color:#111827;letter-spacing:0px;">Holmes</div>
<div class="t" style="left:789px;top:458.48px;font-size:13.25px;font-weight:400;color:#6b6f78;letter-spacing:0px;">11 signups · 4 qualified</div>
<div class="card" style="left:997.5px;top:339.7px;width:210px;height:148.3px;"></div>
<svg style="position:absolute;left:1013.5px;top:353.7px;overflow:visible;" width="16" height="16" viewBox="0 0 16 16"><path d="M-0.5 7.8L8.8 -1.2L17 6.3L7.3 15.8Z" fill="#3b5bdb"/><path d="M2.2 7.8L8.8 1.5L14.3 6.5L7.3 13.2Z" fill="#fff" fill-opacity="0.55"/><path d="M3.22 8.88L9.90 2.50" stroke="#3b5bdb" stroke-width="0.7"/><path d="M3.52 6.54L8.70 11.86" stroke="#3b5bdb" stroke-width="0.7"/><path d="M4.24 9.96L11.00 3.50" stroke="#3b5bdb" stroke-width="0.7"/><path d="M4.84 5.28L10.10 10.52" stroke="#3b5bdb" stroke-width="0.7"/><path d="M5.26 11.04L12.10 4.50" stroke="#3b5bdb" stroke-width="0.7"/><path d="M6.16 4.02L11.50 9.18" stroke="#3b5bdb" stroke-width="0.7"/><path d="M6.28 12.12L13.20 5.50" stroke="#3b5bdb" stroke-width="0.7"/><path d="M7.48 2.76L12.90 7.84" stroke="#3b5bdb" stroke-width="0.7"/><path d="M10.3 0.2L14.8 0.6L15.2 5" fill="#fff" stroke="#3b5bdb" stroke-width="0.8"/><circle cx="13.2" cy="2.4" r="0.8" fill="#3b5bdb"/></svg>
<div class="t" style="left:1012.5px;top:385.52px;font-size:11.2px;font-weight:700;color:#5d6270;letter-spacing:0.85px;">MISSING PRICING</div>
<div class="t" style="left:1012.5px;top:410.68px;font-size:27.2px;font-weight:700;color:#111827;letter-spacing:0px;transform:scaleX(1.12);transform-origin:0 0;">0</div>
<div class="t" style="left:1012.5px;top:451.78px;font-size:13.25px;font-weight:400;color:#6b6f78;letter-spacing:0px;">buyers with gaps</div>
<div class="card" style="left:1221px;top:339.7px;width:210px;height:148.3px;"></div>
<svg style="position:absolute;left:1237px;top:353.7px;overflow:visible;" width="16" height="16" viewBox="0 0 16 16"><rect x="0.5" y="9" width="3.6" height="6.5" fill="#3b5bdb"/><rect x="6" y="5.5" width="3.6" height="10" fill="#3b5bdb"/><rect x="11.5" y="1" width="3.6" height="14.5" fill="#3b5bdb"/></svg>
<div class="t" style="left:1236px;top:385.52px;font-size:11.2px;font-weight:700;color:#5d6270;letter-spacing:0.85px;">UNITS SOLD (ALL TIME)</div>
<div class="t" style="left:1234.7px;top:410.68px;font-size:27.2px;font-weight:700;color:#111827;letter-spacing:-1.0px;">1,535</div>
<div class="t" style="left:1236px;top:451.78px;font-size:13.25px;font-weight:400;color:#6b6f78;letter-spacing:0px;">$120,543.56 paid revenue</div>
<div class="card" style="left:1444.5px;top:339.7px;width:210px;height:148.3px;"></div>
<svg style="position:absolute;left:1460.5px;top:353.7px;overflow:visible;" width="16" height="16" viewBox="0 0 16 16"><rect x="0.75" y="2.3" width="14.75" height="10.7" rx="0.6" fill="#3b5bdb"/><circle cx="4.9" cy="4.6" r="1.4" fill="#fff"/><path d="M2 10.5Q2 7.3 4.9 7.3T8.2 10.5z" fill="#fff"/><rect x="10.3" y="3.4" width="4" height="2.9" fill="#fff"/><rect x="10.3" y="7" width="4" height="3.5" fill="#fff" fill-opacity="0.5"/><rect x="1.6" y="11" width="13" height="1.5" fill="#fff" fill-opacity="0.55"/></svg>
<div class="t" style="left:1459.5px;top:385.52px;font-size:11.2px;font-weight:700;color:#5d6270;letter-spacing:0.85px;">APPROVALS PENDING</div>
<div class="t" style="left:1458.2px;top:410.68px;font-size:27.2px;font-weight:700;color:#111827;letter-spacing:0px;">1</div>
<div class="t" style="left:1459.5px;top:451.78px;font-size:13.25px;font-weight:400;color:#6b6f78;letter-spacing:0px;">1 new buyers in 30d</div>
<div class="card" style="left:327px;top:505.5px;width:881px;height:160.5px;"></div>
<div class="t" style="left:342px;top:542.16px;font-size:14.7px;font-weight:700;color:#111827;letter-spacing:0px;">Today's Orders Snapshot</div>
<div class="t" style="right:728px;top:541.83px;font-size:13.2px;font-weight:400;color:#4272ad;letter-spacing:0px;">Open order board</div>
<div class="t" style="left:342px;top:591.58px;font-size:14.55px;font-weight:400;color:#666a70;letter-spacing:0px;">No orders created today.</div>
<div class="card" style="left:1221px;top:505.5px;width:881px;height:160.5px;"></div>
<div class="t" style="left:1236px;top:523.66px;font-size:14.7px;font-weight:700;color:#111827;letter-spacing:0px;">Unpaid Invoices</div>
<div class="t" style="left:1236px;top:552.61px;font-size:13.1px;font-weight:400;color:#666a70;letter-spacing:0px;">Total open $25.00 · 1 overdue (7+ days) · oldest 35 days.</div>
<div style="position:absolute;left:1236px;top:580px;width:868px;height:34px;background:#f8f9fb;border-bottom:1px solid #e9eaee;"></div>
<div class="t" style="left:1246.5px;top:591.23px;font-size:11.3px;font-weight:700;color:#6a6d75;letter-spacing:0.8px;">ORDER</div>
<div class="t" style="left:1372px;top:591.23px;font-size:11.3px;font-weight:700;color:#6a6d75;letter-spacing:0.8px;">BUYER</div>
<div class="t" style="left:1553px;top:591.23px;font-size:11.3px;font-weight:700;color:#6a6d75;letter-spacing:0.8px;">AMOUNT</div>
<div class="t" style="left:1707px;top:591.23px;font-size:11.3px;font-weight:700;color:#6a6d75;letter-spacing:0.8px;">CREDIT</div>
<div class="t" style="left:1840px;top:591.23px;font-size:11.3px;font-weight:700;color:#6a6d75;letter-spacing:0.8px;">AGE</div>
<div class="t" style="left:1246.5px;top:625.27px;font-size:13.5px;font-weight:700;color:#4272ad;letter-spacing:0px;">#306</div>
<div class="t" style="left:1372px;top:625.82px;font-size:12.85px;font-weight:400;color:#1f2328;letter-spacing:0px;">Travis Baker</div>
<div class="t" style="left:1553px;top:625.27px;font-size:13.5px;font-weight:400;color:#1f2328;letter-spacing:0px;">$25.00</div>
<div style="position:absolute;left:1707px;top:631.5px;width:13px;height:1.3px;background:#333;"></div>
<div class="t" style="left:1840px;top:625.27px;font-size:13.5px;font-weight:400;color:#1f2328;letter-spacing:0px;">35d</div>
<div style="position:absolute;left:1236px;top:651px;width:868px;height:1px;background:#eeeff2;"></div>
<div class="card" style="left:327px;top:679.5px;width:881px;height:287.5px;"></div>
<div class="t" style="left:342px;top:721.66px;font-size:14.7px;font-weight:700;color:#111827;letter-spacing:0px;">Top 3 Selling Products (All Time)</div>
<div class="t" style="right:728px;top:720.88px;font-size:13.25px;font-weight:400;color:#4272ad;letter-spacing:0px;">Open inventory</div>
<div class="t" style="left:342px;top:774.66px;font-size:12.8px;font-weight:400;color:#2c2f35;letter-spacing:0px;">RETATRUTIDE - 30MG</div>
<div class="t" style="right:728px;top:774.92px;font-size:12.5px;font-weight:700;color:#1b1e24;letter-spacing:0px;">181 sold</div>
<div style="position:absolute;left:342px;top:791.5px;width:850px;height:10px;border-radius:6px;background:#eef1f8;box-shadow:inset 0 0 0 1px #e4e8f2;"></div>
<div style="position:absolute;left:342px;top:791.5px;width:850.0px;height:10px;border-radius:6px;background:linear-gradient(90deg,#3559d6,#4a9de0);"></div>
<div class="t" style="left:342px;top:838.16px;font-size:12.8px;font-weight:400;color:#2c2f35;letter-spacing:0px;">KLOW 80MG - 80MG</div>
<div class="t" style="right:728px;top:838.42px;font-size:12.5px;font-weight:700;color:#1b1e24;letter-spacing:0px;">116 sold</div>
<div style="position:absolute;left:342px;top:855px;width:850px;height:10px;border-radius:6px;background:#eef1f8;box-shadow:inset 0 0 0 1px #e4e8f2;"></div>
<div style="position:absolute;left:342px;top:855px;width:544.8px;height:10px;border-radius:6px;background:linear-gradient(90deg,#3559d6,#4a9de0);"></div>
<div class="t" style="left:342px;top:901.56px;font-size:12.8px;font-weight:400;color:#2c2f35;letter-spacing:0px;">TIRZEPATIDE - 30MG</div>
<div class="t" style="right:728px;top:901.82px;font-size:12.5px;font-weight:700;color:#1b1e24;letter-spacing:0px;">98 sold</div>
<div style="position:absolute;left:342px;top:918.4px;width:850px;height:10px;border-radius:6px;background:#eef1f8;box-shadow:inset 0 0 0 1px #e4e8f2;"></div>
<div style="position:absolute;left:342px;top:918.4px;width:460.2px;height:10px;border-radius:6px;background:linear-gradient(90deg,#3559d6,#4a9de0);"></div>
<div class="card" style="left:1221px;top:679.5px;width:881px;height:287.5px;"></div>
<div class="t" style="left:1236px;top:697.66px;font-size:14.7px;font-weight:700;color:#111827;letter-spacing:0px;">Most Profitable Products (All Time)</div>
<div class="t" style="left:1236px;top:726.96px;font-size:12.8px;font-weight:400;color:#2c2f35;letter-spacing:0px;">RETATRUTIDE - 30MG</div>
<div style="position:absolute;left:1236px;top:743.8px;width:853px;height:10px;border-radius:6px;background:#ebfaf0;box-shadow:inset 0 0 0 1px #dcefe3;"></div>
<div style="position:absolute;left:1236px;top:743.8px;width:853.0px;height:10px;border-radius:6px;background:linear-gradient(90deg,#3e9a56,#55b47f);"></div>
<div class="t" style="left:1236px;top:774.76px;font-size:12.8px;font-weight:400;color:#2c2f35;letter-spacing:0px;">TIRZEPATIDE - 30MG</div>
<div style="position:absolute;left:1236px;top:791.6px;width:853px;height:10px;border-radius:6px;background:#ebfaf0;box-shadow:inset 0 0 0 1px #dcefe3;"></div>
<div style="position:absolute;left:1236px;top:791.6px;width:586.0px;height:10px;border-radius:6px;background:linear-gradient(90deg,#3e9a56,#55b47f);"></div>
<div class="t" style="left:1236px;top:822.46px;font-size:12.8px;font-weight:400;color:#2c2f35;letter-spacing:0px;">NAD+ - 500MG</div>
<div style="position:absolute;left:1236px;top:839.3px;width:853px;height:10px;border-radius:6px;background:#ebfaf0;box-shadow:inset 0 0 0 1px #dcefe3;"></div>
<div style="position:absolute;left:1236px;top:839.3px;width:314.0px;height:10px;border-radius:6px;background:linear-gradient(90deg,#3e9a56,#55b47f);"></div>
<div class="t" style="left:1236px;top:869.96px;font-size:12.8px;font-weight:400;color:#2c2f35;letter-spacing:0px;">KLOW 80MG - 80MG</div>
<div style="position:absolute;left:1236px;top:886.8px;width:853px;height:10px;border-radius:6px;background:#ebfaf0;box-shadow:inset 0 0 0 1px #dcefe3;"></div>
<div style="position:absolute;left:1236px;top:886.8px;width:281.0px;height:10px;border-radius:6px;background:linear-gradient(90deg,#3e9a56,#55b47f);"></div>
<div class="t" style="left:1236px;top:917.46px;font-size:12.8px;font-weight:400;color:#2c2f35;letter-spacing:0px;">TIRZEPATIDE - 60MG</div>
<div style="position:absolute;left:1236px;top:934.3px;width:853px;height:10px;border-radius:6px;background:#ebfaf0;box-shadow:inset 0 0 0 1px #dcefe3;"></div>
<div style="position:absolute;left:1236px;top:934.3px;width:213.0px;height:10px;border-radius:6px;background:linear-gradient(90deg,#3e9a56,#55b47f);"></div>
<div class="card" style="left:327px;top:980.5px;width:582.5px;height:260px;"></div>
<div class="t" style="left:342px;top:1040.36px;font-size:14.7px;font-weight:700;color:#111827;letter-spacing:0px;">Payment Mix (Last 30 Days)</div>
<div class="t" style="right:1026px;top:1039.58px;font-size:13.25px;font-weight:400;color:#4272ad;letter-spacing:0px;">View paid orders</div>
<div class="t" style="left:342px;top:1151.74px;font-size:13.3px;font-weight:400;color:#3a3d42;letter-spacing:0px;">Zelle</div>
<div class="t" style="right:1026px;top:1152.50px;font-size:12.4px;font-weight:400;color:#3a3d42;letter-spacing:0px;">1 · 100.0%</div>
<div class="card" style="left:923px;top:980.5px;width:582.5px;height:260px;"></div>
<div class="t" style="left:938px;top:1014.86px;font-size:14.7px;font-weight:700;color:#111827;letter-spacing:0px;">Fulfillment Pulse (Last 30 Days)</div>
<div class="t" style="right:430px;top:1013.51px;font-size:13.1px;font-weight:400;color:#4272ad;letter-spacing:0px;">Go to order queue</div>
<div class="t" style="left:938px;top:1064.14px;font-size:13.3px;font-weight:400;color:#3a3d42;letter-spacing:0px;">Total orders</div>
<div class="t" style="right:430px;top:1064.14px;font-size:13.3px;font-weight:700;color:#16191e;letter-spacing:0px;">1</div>
<div class="t" style="left:938px;top:1105.94px;font-size:13.3px;font-weight:400;color:#3a3d42;letter-spacing:0px;">Shipping vs pickup</div>
<div class="t" style="right:430px;top:1105.94px;font-size:13.3px;font-weight:700;color:#16191e;letter-spacing:0px;">1 / 0</div>
<div class="t" style="left:938px;top:1147.54px;font-size:13.3px;font-weight:400;color:#3a3d42;letter-spacing:0px;">Progressed status</div>
<div class="t" style="right:430px;top:1147.54px;font-size:13.3px;font-weight:700;color:#16191e;letter-spacing:0px;">0.0%</div>
<div class="t" style="left:938px;top:1189.24px;font-size:13.3px;font-weight:400;color:#3a3d42;letter-spacing:0px;">Unpaid created today</div>
<div class="t" style="right:430px;top:1189.24px;font-size:13.3px;font-weight:700;color:#16191e;letter-spacing:0px;">0</div>
<div class="card" style="left:1519px;top:980.5px;width:582.5px;height:260px;"></div>
<div class="t" style="left:1534px;top:998.26px;font-size:14.7px;font-weight:700;color:#111827;letter-spacing:0px;">Fun but Useful Stats</div>
<div class="t" style="left:1534px;top:1026.74px;font-size:13.3px;font-weight:400;color:#3a3d42;letter-spacing:0px;">Best seller</div>
<div class="t" style="left:1534px;top:1059.94px;font-size:13.3px;font-weight:400;color:#3a3d42;letter-spacing:0px;">Most profitable SKU</div>
<div class="t" style="left:1534px;top:1093.34px;font-size:13.3px;font-weight:400;color:#3a3d42;letter-spacing:0px;">Largest order today</div>
<div class="t" style="left:1534px;top:1126.44px;font-size:13.3px;font-weight:400;color:#3a3d42;letter-spacing:0px;">Top buyer this month</div>
<div class="t" style="left:1534px;top:1159.64px;font-size:13.3px;font-weight:400;color:#3a3d42;letter-spacing:0px;">Month paid revenue</div>
<div class="t" style="left:1534px;top:1192.84px;font-size:13.3px;font-weight:400;color:#3a3d42;letter-spacing:0px;">Expense focus</div>
</div></body></html>
